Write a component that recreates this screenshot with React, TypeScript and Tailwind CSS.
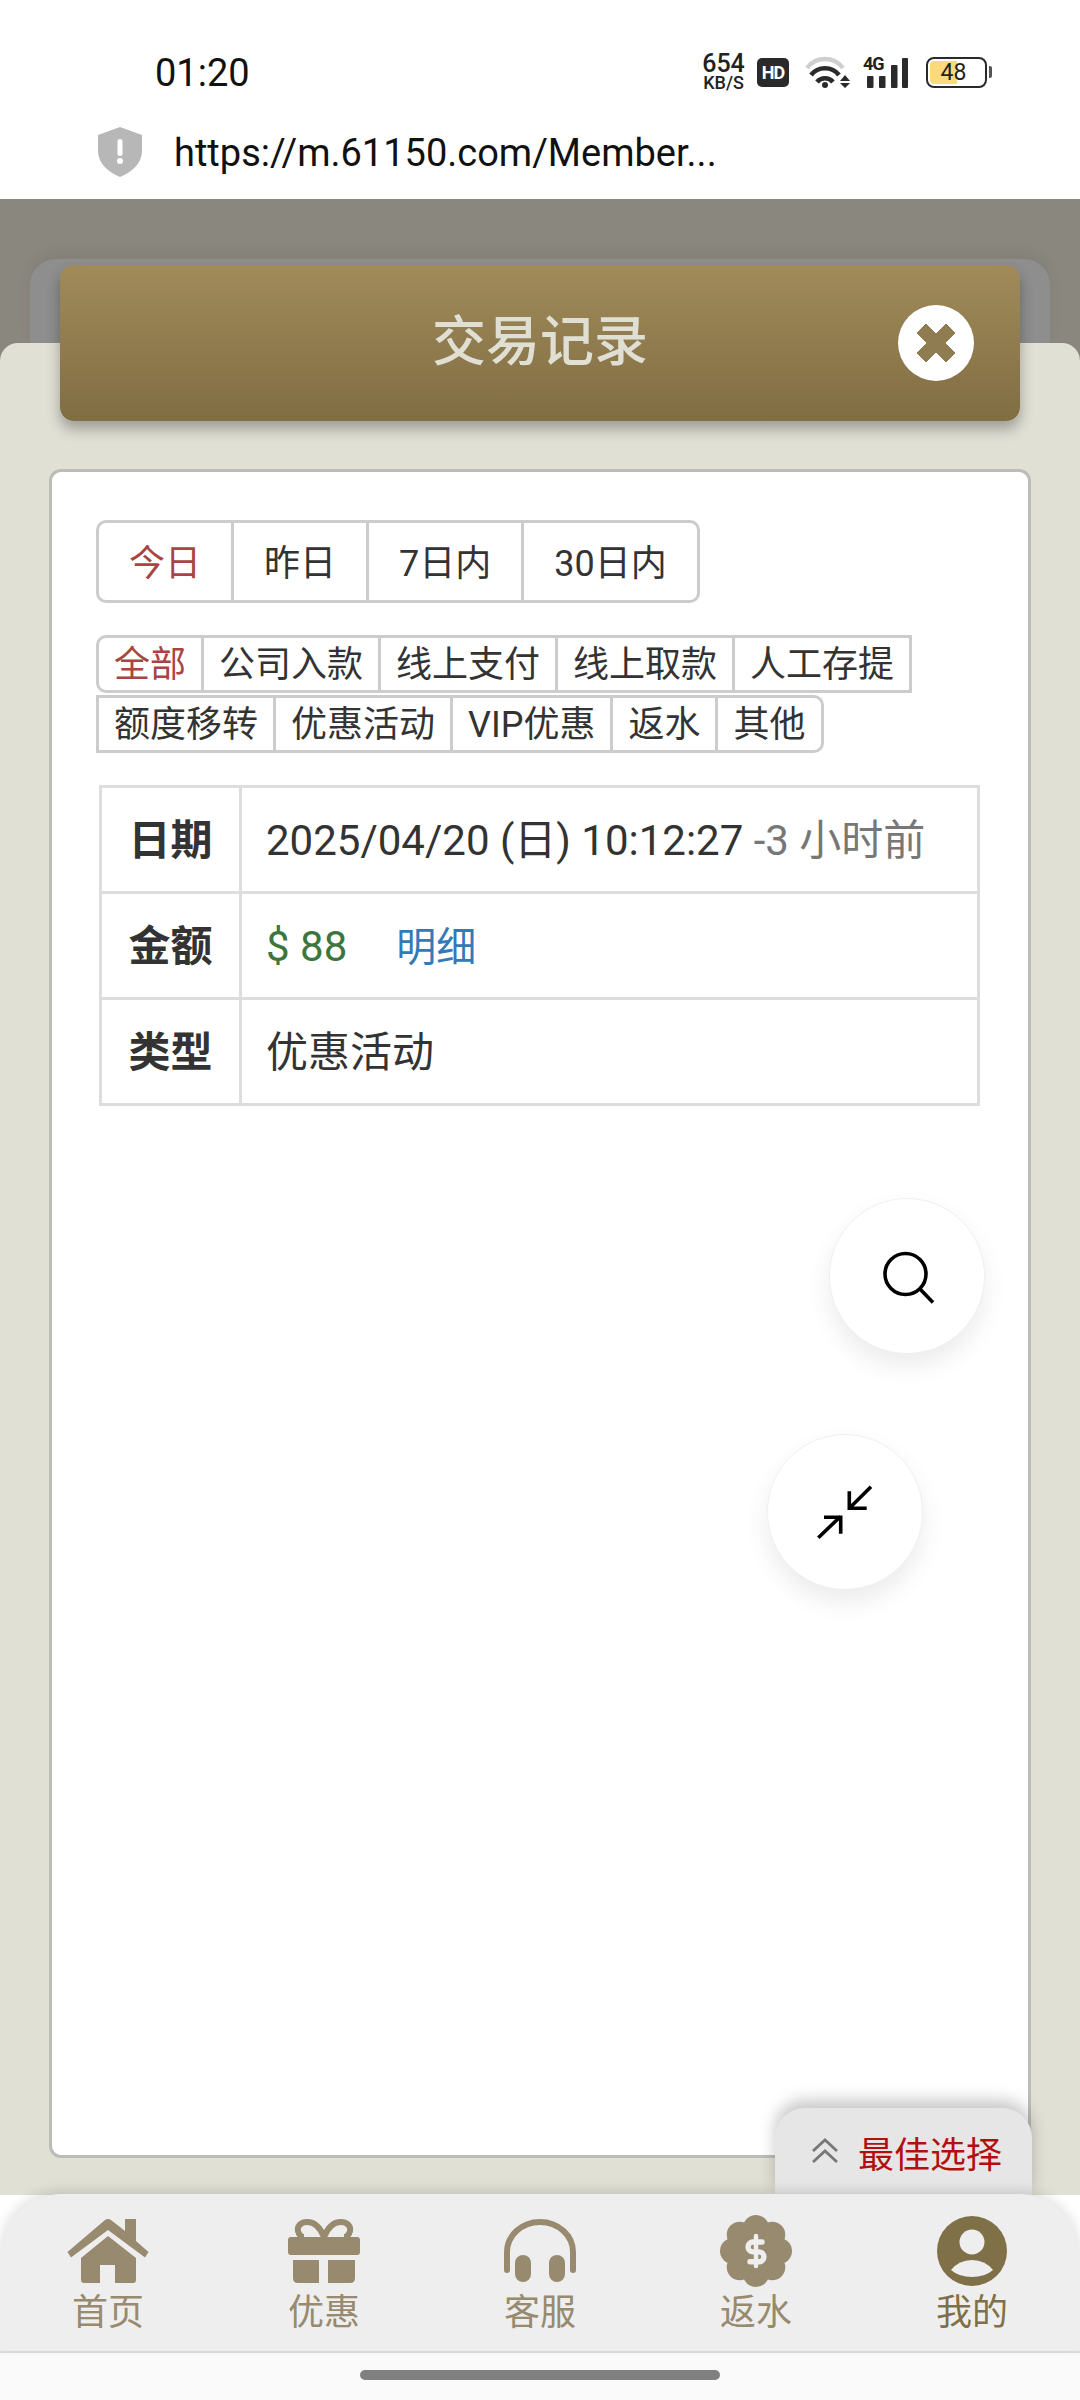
import React from "react";

const font = { fontFamily: '"Roboto","Noto Sans CJK SC",sans-serif' };

function Shield() {
  return (
    <svg width="44" height="50" viewBox="0 0 44 50">
      <path d="M22 0 L44 8 V24 C44 36 34 45 22 50 C10 45 0 36 0 24 V8 Z" fill="#b7b7b7" />
      <rect x="19.5" y="12" width="5" height="17" rx="2.5" fill="#fff" />
      <circle cx="22" cy="34" r="3" fill="#fff" />
    </svg>
  );
}

function Wifi() {
  return (
    <svg width="46" height="34" viewBox="0 0 46 34" fill="none">
      <path d="M2 13 C11 1 29 1 38 13" stroke="#cfcfcf" strokeWidth="4.5" />
      <path d="M6 20 C13 11 27 11 34 20" stroke="#2a2a2a" strokeWidth="4.5" />
      <path d="M12 27 C16 22 24 22 28 27" stroke="#2a2a2a" strokeWidth="4.5" />
      <circle cx="20" cy="30" r="3" fill="#2a2a2a" />
      <path d="M40 20 L45 26 H35 Z M35 28 H45 L40 33 Z" fill="#2a2a2a" />
    </svg>
  );
}

function Bars() {
  return (
    <div className="relative w-[46px] h-[32px]">
      <span className="absolute left-0 top-[-1px] text-[18px] leading-[17px] font-bold text-[#222] tracking-[-1px]">4G</span>
      <svg width="46" height="32" viewBox="0 0 46 32" fill="#2a2a2a">
        <rect x="4" y="20" width="6.5" height="12" rx="1" />
        <rect x="16" y="20" width="6.5" height="12" rx="1" />
        <rect x="28" y="9" width="6.5" height="23" rx="1" />
        <rect x="39" y="2" width="6" height="30" rx="1" />
      </svg>
    </div>
  );
}

function Battery() {
  return (
    <div className="flex items-center">
      <div className="relative w-[61px] h-[31px] rounded-[8px] border-[2.5px] border-[#2a2a2a] overflow-hidden flex items-center justify-center">
        <div className="absolute left-[2px] top-[2px] bottom-[2px] w-[27px] bg-[#fbd97c] rounded-l-[4px]" />
        <span className="relative text-[23px] leading-none text-[#222] ml-[-6px]">48</span>
      </div>
      <div className="w-[3px] h-[12px] bg-[#555] ml-[2px] rounded-r-[2px]" />
    </div>
  );
}

function StatusBar() {
  return (
    <div className="h-[199px] bg-white flex flex-col shrink-0">
      <div className="h-[40px] mt-[52px] flex items-center pl-[155px] pr-[88px]">
        <div className="text-[38px] leading-[40px] pt-[1px] text-[#111]">01:20</div>
        <div className="ml-auto flex items-center text-[#222]">
          <div className="flex flex-col items-center w-[45px]">
            <span className="text-[25px] leading-[21px] font-medium">654</span>
            <span className="text-[18px] leading-[17px] font-medium">KB/S</span>
          </div>
          <div className="ml-[11px] w-[32px] h-[29px] bg-[#2a2a2a] rounded-[5px] text-white text-[18px] font-bold flex items-center justify-center tracking-[-1px]">HD</div>
          <div className="ml-[16px]"><Wifi /></div>
          <div className="ml-[12px]"><Bars /></div>
          <div className="ml-[17px]"><Battery /></div>
        </div>
      </div>
      <div className="flex items-center pl-[98px] mt-[34px]">
        <Shield />
        <span className="ml-[32px] text-[38px] leading-[50px] pt-[2px] text-[#111]">https://m.61150.com/Member...</span>
      </div>
    </div>
  );
}

function Close() {
  return (
    <div className="w-[76px] h-[76px] rounded-full bg-white flex items-center justify-center">
      <svg width="40" height="40" viewBox="0 0 40 40">
        <path d="M10 1 L20 11 L30 1 L39 10 L29 20 L39 30 L30 39 L20 29 L10 39 L1 30 L11 20 L1 10 Z" fill="#8f7c50" stroke="#8f7c50" strokeWidth="1" strokeLinejoin="round" />
      </svg>
    </div>
  );
}

function Tabs() {
  const items = ["今日", "昨日", "7日内", "30日内"];
  return (
    <div className="flex w-fit h-[83px] border-[3px] border-[#ccc] rounded-[10px] text-[36px] text-[#333]">
      {items.map((t, i) => (
        <div
          key={t}
          className={
            i === 0
              ? "px-[30px] pt-[4px] flex items-center border-r-[3px] border-[#ccc] text-[#a94442]"
              : i === 3
              ? "px-[30px] pt-[4px] flex items-center"
              : "px-[30px] pt-[4px] flex items-center border-r-[3px] border-[#ccc]"
          }
        >
          {t}
        </div>
      ))}
    </div>
  );
}

function Filters() {
  const items = ["全部", "公司入款", "线上支付", "线上取款", "人工存提", "额度移转", "优惠活动", "VIP优惠", "返水", "其他"];
  return (
    <div className="flex flex-wrap w-[830px] mt-[32px] ml-[3px] text-[36px] text-[#333] gap-y-[2px]">
      {items.map((t, i) => (
        <div
          key={t}
          className={
            i === 0
              ? "h-[58px] px-[15px] pt-[2px] -ml-[3px] border-[3px] border-[#ccc] flex items-center rounded-l-[10px] text-[#a94442]"
              : i === 9
              ? "h-[58px] px-[15px] pt-[2px] -ml-[3px] border-[3px] border-[#ccc] flex items-center rounded-r-[10px]"
              : "h-[58px] px-[15px] pt-[2px] -ml-[3px] border-[3px] border-[#ccc] flex items-center"
          }
        >
          {t}
        </div>
      ))}
    </div>
  );
}

function Detail() {
  const th = "border-[3px] border-[#ddd] text-center font-bold text-[#333] text-[42px] p-0 pt-[2px]";
  const td = "border-[3px] border-[#ddd] pl-[24px] pt-[2px] text-[42px] text-[#333] p-0";
  return (
    <table className="w-[881px] ml-[3px] mt-[32px] border-collapse table-fixed">
      <colgroup>
        <col className="w-[140px]" />
        <col />
      </colgroup>
      <tbody>
        <tr className="h-[106px]">
          <th className={th}>日期</th>
          <td className={td}>
            2025/04/20 (日) 10:12:27 <span className="text-[#777]">-3 小时前</span>
          </td>
        </tr>
        <tr className="h-[106px]">
          <th className={th}>金额</th>
          <td className={td}>
            <span className="text-[#3c763d]">$ 88</span>
            <span className="ml-[49px] text-[40px] text-[#337ab7]">明细</span>
          </td>
        </tr>
        <tr className="h-[106px]">
          <th className={th}>类型</th>
          <td className={td}>优惠活动</td>
        </tr>
      </tbody>
    </table>
  );
}

function Home() {
  return (
    <svg width="82" height="64" viewBox="0 0 82 64" fill="#978a6f">
      <path d="M4 38.5 L0.5 33 L38 1 Q41 -1 44 1 L58 12 V0 H69 V22 L81.5 33 L78 38.5 L41 11 Z" />
      <path d="M41 17 L69 39 V61 Q69 64 66 64 H48 V46 H33 V64 H17 Q14 64 14 61 V39 Z" />
    </svg>
  );
}

function Gift() {
  return (
    <svg width="72" height="64" viewBox="0 0 72 64" fill="#978a6f">
      <path d="M36 18 C32 8 26 3 19 3 C12 3 9 8 10 12 C11 16 13 18 16 18" fill="none" stroke="#978a6f" strokeWidth="6" />
      <path d="M36 18 C40 8 46 3 53 3 C60 3 63 8 62 12 C61 16 59 18 56 18" fill="none" stroke="#978a6f" strokeWidth="6" />
      <rect x="0" y="18" width="72" height="18" rx="3" />
      <path d="M5 41 H31 V64 H10 Q5 64 5 59 Z" />
      <path d="M40 41 H67 V59 Q67 64 62 64 H40 Z" />
    </svg>
  );
}

function Headset() {
  return (
    <svg width="72" height="64" viewBox="0 0 72 64" fill="#978a6f">
      <path d="M3 51 V33 A33 30 0 0 1 69 33 V51" fill="none" stroke="#978a6f" strokeWidth="6" strokeLinecap="round" />
      <rect x="11" y="36" width="16" height="27" rx="8" />
      <rect x="45" y="36" width="16" height="27" rx="8" />
    </svg>
  );
}

function Flower() {
  const lobes = [0, 45, 90, 135, 180, 225, 270, 315];
  return (
    <svg width="72" height="72" viewBox="0 0 72 72" fill="#978a6f">
      <circle cx="36" cy="36" r="26" />
      {lobes.map((a) => (
        <circle
          key={a}
          cx={36 + 23 * Math.cos((a * Math.PI) / 180)}
          cy={36 + 23 * Math.sin((a * Math.PI) / 180)}
          r="13"
        />
      ))}
      <g transform="translate(18 18) scale(1.5)" fill="none" stroke="#eeeeee" strokeWidth="3.6" strokeLinecap="round" strokeLinejoin="round">
        <path d="M12 2 V22" strokeWidth="3" />
        <path d="M16 6 H10 a3.3 3.3 0 0 0 0 6.6 h4 a3.3 3.3 0 0 1 0 6.6 H8" />
      </g>
    </svg>
  );
}

function User() {
  return (
    <svg width="70" height="70" viewBox="0 0 70 70">
      <circle cx="35" cy="35" r="35" fill="#7f7048" />
      <circle cx="35" cy="26" r="12.5" fill="#eeeeee" />
      <path d="M14 54 Q22 44 35 44 Q48 44 56 54 Q48 61 35 61 Q22 61 14 54 Z" fill="#eeeeee" />
    </svg>
  );
}

function NavItem({ icon, label, active }: { icon: React.ReactNode; label: string; active?: boolean }) {
  return (
    <div className="flex flex-col items-center">
      <div className="h-[72px] flex items-center justify-center">{icon}</div>
      <span className={active ? "text-[36px] leading-[40px] mt-[6px] text-[#7f7048]" : "text-[36px] leading-[40px] mt-[6px] text-[#978a6f]"}>{label}</span>
    </div>
  );
}

function Fab({ className, children }: { className: string; children: React.ReactNode }) {
  return (
    <div className={"absolute w-[156px] h-[156px] rounded-full bg-white border border-[#f0f0f0] shadow-[0_12px_24px_rgba(0,0,0,0.08)] flex items-center justify-center " + className}>
      {children}
    </div>
  );
}

export default function App() {
  return (
    <div className="w-[1080px] h-[2400px] flex flex-col overflow-hidden bg-white" style={font}>
      <StatusBar />
      <div className="relative flex-1 flex flex-col bg-[#8a877f] pt-[60px] min-h-0">
        <div className="h-[84px] mx-[30px] rounded-t-[26px] bg-[#8e8e8e] shadow-[0_-6px_14px_rgba(0,0,0,0.06)] shrink-0" />
        <div className="relative flex-1 flex flex-col bg-[#e1e0d5] rounded-t-[18px] min-h-0">
          <div className="relative mx-[60px] -mt-[78px] h-[156px] shrink-0 rounded-[14px] bg-gradient-to-b from-[#a18b5b] to-[#806d42] shadow-[0_8px_14px_rgba(0,0,0,0.3)] flex items-center justify-center">
            <span className="text-[54px] text-[#e0dfd4] font-medium -mt-[2px]">交易记录</span>
            <div className="absolute right-[46px] top-[40px]"><Close /></div>
          </div>
          <div className="relative flex-1 mx-[49px] mt-[48px] mb-[37px] bg-white border-[3px] border-[#bcbcb8] rounded-[12px] pt-[48px] pl-[44px] min-h-0">
            <Tabs />
            <Filters />
            <Detail />
            <Fab className="left-[777px] top-[726px]">
              <svg width="64" height="64" viewBox="0 0 64 64" fill="none" stroke="#000" strokeWidth="3.6">
                <circle cx="30.5" cy="30" r="20.5" />
                <path d="M45 45 L58 58.5" />
              </svg>
            </Fab>
            <Fab className="left-[715px] top-[962px]">
              <svg width="64" height="64" viewBox="0 0 64 64" fill="none" stroke="#000" strokeWidth="3.6">
                <path d="M5.3 57.8 L27.7 36.2 M11 37.2 H27.7 V53.8" />
                <path d="M58 6.8 L36.3 28.2 M36.3 11.2 V28.2 H53.7" />
              </svg>
            </Fab>
          </div>
          <div className="absolute right-[48px] bottom-0 w-[257px] h-[87px] bg-[#e6e6e6] rounded-t-[30px] shadow-[0_-8px_16px_rgba(0,0,0,0.22)] flex items-start pt-[27px] pl-[37px]">
            <svg width="26" height="26" viewBox="0 0 26 26" fill="none" stroke="#777" strokeWidth="2.8" className="mt-[3px]">
              <path d="M1 13 L13 2 L25 13 M1 24 L13 13 L25 24" />
            </svg>
            <span className="ml-[20px] text-[36px] leading-[42px] text-[#b30f0f] whitespace-nowrap">最佳选择</span>
          </div>
        </div>
      </div>
      <div className="relative h-[157px] shrink-0 rounded-t-[62px] bg-[#eeeeee] -mt-px grid grid-cols-5 pt-[21px] shadow-[0_-4px_12px_rgba(0,0,0,0.12)]">
        <NavItem icon={<Home />} label="首页" />
        <NavItem icon={<Gift />} label="优惠" />
        <NavItem icon={<Headset />} label="客服" />
        <NavItem icon={<Flower />} label="返水" />
        <NavItem icon={<User />} label="我的" active />
      </div>
      <div className="h-[49px] shrink-0 bg-[#fafafa] border-t-2 border-[#dedede] flex justify-center pt-[17px]">
        <div className="w-[360px] h-[10px] rounded-full bg-[#808080]" />
      </div>
    </div>
  );
}
